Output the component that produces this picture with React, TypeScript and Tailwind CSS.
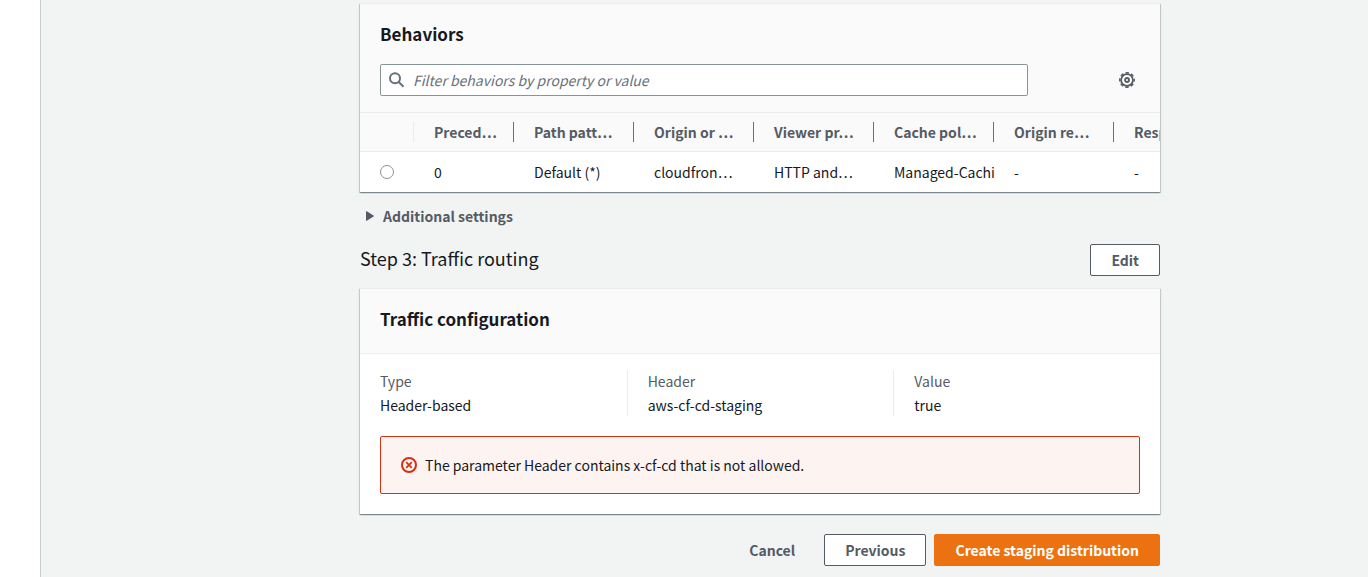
import { useState, type ReactNode } from "react";

const columns = [
  { label: "Preced…", value: "0", width: "w-[100px]" },
  { label: "Path patt…", value: "Default (*)", width: "w-[120px]" },
  { label: "Origin or …", value: "cloudfron…", width: "w-[120px]" },
  { label: "Viewer pr…", value: "HTTP and…", width: "w-[120px]" },
  { label: "Cache pol…", value: "Managed-Caching", width: "w-[120px]" },
  { label: "Origin re…", value: "-", width: "w-[120px]" },
  { label: "Respo…", value: "-", width: "w-[120px]" },
];

const details = [
  { label: "Type", value: "Header-based" },
  { label: "Header", value: "aws-cf-cd-staging" },
  { label: "Value", value: "true" },
];

function SearchIcon() {
  return (
    <svg viewBox="0 0 16 16" className="size-4 shrink-0" fill="none" stroke="#687078" strokeWidth="2" aria-hidden="true">
      <circle cx="6" cy="6.2" r="5" />
      <path d="M9.5 9.7l5 5" />
    </svg>
  );
}

function GearIcon() {
  return (
    <svg viewBox="0 0 16 16" className="size-4" fill="none" stroke="#545b64" aria-hidden="true">
      <circle cx="8" cy="8" r="5.9" strokeWidth="1.7" />
      <circle cx="8" cy="8" r="7.2" strokeWidth="1.5" strokeDasharray="3.4 2.255" strokeDashoffset="1.7" />
      <circle cx="8" cy="8" r="2" strokeWidth="1.8" />
    </svg>
  );
}

function ErrorIcon() {
  return (
    <svg viewBox="0 0 16 16" className="size-4 shrink-0" fill="none" stroke="#d13212" strokeWidth="2" aria-hidden="true">
      <circle cx="8" cy="8" r="7" />
      <path d="M5.2 5.2l5.6 5.6M10.8 5.2l-5.6 5.6" strokeWidth="1.7" />
    </svg>
  );
}

function Panel({ children }: { children: ReactNode }) {
  return (
    <section className="border-t border-[#eaeded] bg-white shadow-[0_1px_1px_0_rgba(0,28,36,0.3),1px_1px_1px_0_rgba(0,28,36,0.15),-1px_1px_1px_0_rgba(0,28,36,0.15)]">
      {children}
    </section>
  );
}

function Button({ children, variant = "normal" }: { children: ReactNode; variant?: "normal" | "link" | "primary" }) {
  const styles = {
    normal: "border-[#545b64] bg-white text-[#545b64] hover:bg-[#fafafa]",
    link: "border-transparent text-[#545b64] hover:bg-[#fafafa]",
    primary: "border-[#ec7211] bg-[#ec7211] text-white hover:bg-[#eb5f07]",
  };
  return (
    <button type="button" className={`h-8 rounded-xs border px-5 leading-5 font-bold ${styles[variant]}`}>
      {children}
    </button>
  );
}

export default function App() {
  const [filter, setFilter] = useState("");
  const [selected, setSelected] = useState(false);

  return (
    <div className="flex min-h-screen bg-[#f2f3f3] font-['Noto_Sans_CJK_JP',sans-serif] text-sm leading-5 text-[#16191f]">
      <aside className="w-[41px] shrink-0 border-r border-[#c5cccc] bg-white" />

      <main className="min-w-0 flex-1 pt-[3px] pr-5 pb-[11px] pl-[39px]">
        <div className="max-w-[1080px] pl-[280px]">
          <Panel>
            <div className="bg-[#fafafa] px-5 pt-[18px] pb-4">
              <h2 className="text-[17px] leading-6 font-bold">Behaviors</h2>
              <div className="mt-[18px] flex items-center">
                <label className="flex h-8 w-full max-w-[648px] items-center gap-2 rounded-xs border border-[#879596] bg-white px-2">
                  <SearchIcon />
                  <input
                    type="text"
                    aria-label="Filter behaviors"
                    value={filter}
                    onChange={(e) => setFilter(e.target.value)}
                    placeholder="Filter behaviors by property or value"
                    className="min-w-0 flex-1 outline-none placeholder:text-[#687078] placeholder:italic"
                  />
                </label>
                <button type="button" aria-label="Preferences" className="mr-[5px] ml-auto">
                  <GearIcon />
                </button>
              </div>
            </div>

            <div className="overflow-hidden border-t border-[#eaeded]">
              <table className="w-[874px] table-fixed border-collapse text-left whitespace-nowrap">
                <thead className="border-b border-[#eaeded] bg-[#fafafa] text-[#545b64]">
                  <tr>
                    <th className="w-[54px] py-[9px]">
                      <div className="h-5 border-r border-[#eaeded]" />
                    </th>
                    {columns.map((c) => (
                      <th key={c.label} className={`${c.width} py-[9px]`}>
                        <div className="overflow-hidden border-r border-[#687078] pl-5">{c.label}</div>
                      </th>
                    ))}
                  </tr>
                </thead>
                <tbody>
                  <tr>
                    <td className="py-[10px] pl-5">
                      <input
                        type="radio"
                        name="behavior"
                        aria-label="Select behavior 0"
                        checked={selected}
                        onChange={() => setSelected(true)}
                        className="block size-[14px] appearance-none rounded-full border border-[#879596] bg-white checked:border-4 checked:border-[#0073bb]"
                      />
                    </td>
                    {columns.map((c) => (
                      <td key={c.label} className="py-[10px] pl-5">
                        <div className="overflow-hidden">{c.value}</div>
                      </td>
                    ))}
                  </tr>
                </tbody>
              </table>
            </div>
          </Panel>

          <button type="button" className="mt-[14px] flex items-center gap-2 pl-[6px] font-bold text-[#545b64]">
            <svg viewBox="0 0 9 10" className="h-[10px] w-[9px]" fill="#545b64" aria-hidden="true">
              <path d="M0 0.8Q0 0 0.8 0.3L7.5 4.4Q8.1 5 7.5 5.6L0.8 9.7Q0 10 0 9.2Z" />
            </svg>
            Additional settings
          </button>

          <div className="mt-[18px] mb-3 flex items-start justify-between">
            <h2 className="pt-[2px] text-lg leading-6">Step 3: Traffic routing</h2>
            <Button>Edit</Button>
          </div>

          <Panel>
            <div className="border-b border-[#eaeded] bg-[#fafafa] px-5 pt-[18px] pb-[22px]">
              <h2 className="text-[17px] leading-6 font-bold">Traffic configuration</h2>
            </div>
            <dl className="grid grid-cols-3 pt-4">
              {details.map((d) => (
                <div key={d.label} className="border-l border-[#eaeded] pl-5 leading-[22px] first:border-l-0">
                  <dt className="text-[#545b64]">{d.label}</dt>
                  <dd className="mt-[2px]">{d.value}</dd>
                </div>
              ))}
            </dl>
            <div className="p-5">
              <div role="alert" className="flex items-center gap-2 rounded-xs border border-[#d13212] bg-[#fdf3f1] px-5 py-[18px]">
                <ErrorIcon />
                The parameter Header contains x-cf-cd that is not allowed.
              </div>
            </div>
          </Panel>

          <div className="mt-5 flex items-center justify-end gap-2">
            <Button variant="link">Cancel</Button>
            <Button>Previous</Button>
            <Button variant="primary">Create staging distribution</Button>
          </div>
        </div>
      </main>
    </div>
  );
}
